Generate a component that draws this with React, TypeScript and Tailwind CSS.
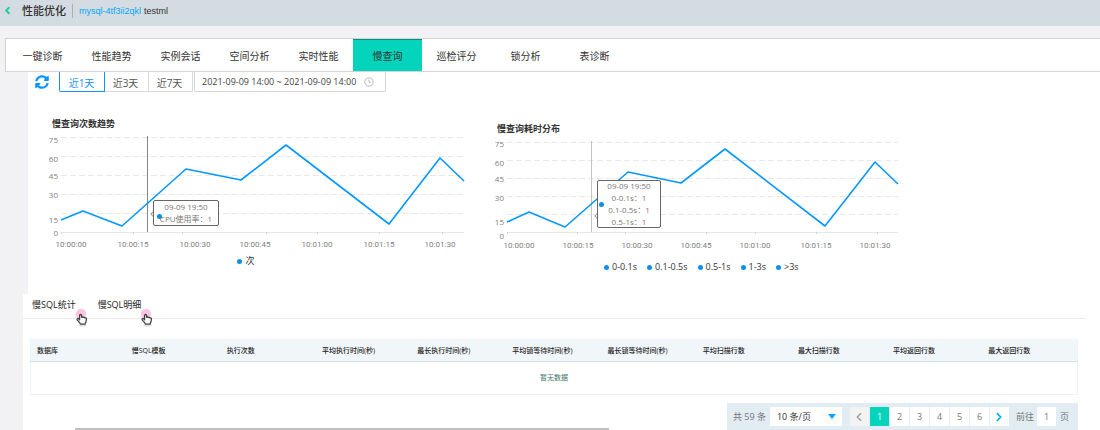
import { FaSyncAlt } from "react-icons/fa";
import { ChevronLeft, ChevronRight } from "lucide-react";

type Point = [number, number];
type AxisLabel = { x: number; text: string };

type ChartProps = {
  label: string;
  gridTop: number;
  gridStep: number;
  left: number;
  right: number;
  points: Point[];
  yLabels: number[];
  xLabels: AxisLabel[];
  xLabelY: number;
  ticks: number[];
  cursorX: number;
  cursorClass: string;
};

const TABS = ["一键诊断", "性能趋势", "实例会话", "空间分析", "实时性能", "慢查询", "巡检评分", "锁分析", "表诊断"];
const RANGES = ["近1天", "近3天", "近7天"];
const Y_VALUES = ["75", "60", "45", "30", "15", "0"];
const TIMES = ["10:00:00", "10:00:15", "10:00:30", "10:00:45", "10:01:00", "10:01:15", "10:01:30"];
const BUCKETS = ["0-0.1s", "0.1-0.5s", "0.5-1s", "1-3s", ">3s"];
const COLUMNS = [
  "数据库",
  "慢SQL模板",
  "执行次数",
  "平均执行时间(秒)",
  "最长执行时间(秒)",
  "平均锁等待时间(秒)",
  "最长锁等待时间(秒)",
  "平均扫描行数",
  "最大扫描行数",
  "平均返回行数",
  "最大返回行数",
];
const PAGES = [1, 2, 3, 4, 5, 6];

const labelsAt = (xs: number[]): AxisLabel[] => xs.map((x, i) => ({ x, text: TIMES[i] }));

function LineChart(p: ChartProps) {
  const rows = [0, 1, 2, 3, 4];
  const base = p.gridTop + p.gridStep * 5;
  return (
    <svg role="img" aria-label={p.label} width="432" height="120" viewBox="0 0 432 120" className="block">
      {rows.map((r) => (
        <line
          key={r}
          x1={p.left}
          x2={p.right}
          y1={p.gridTop + r * p.gridStep + 0.5}
          y2={p.gridTop + r * p.gridStep + 0.5}
          stroke="#e8e8e8"
          strokeDasharray="6 3"
        />
      ))}
      <line x1={p.left} x2={p.right} y1={base + 0.5} y2={base + 0.5} stroke="#e6e6e6" />
      {p.ticks.map((x) => (
        <line key={x} x1={x + 0.5} x2={x + 0.5} y1={base} y2={base + 2} stroke="#d4d4d4" />
      ))}
      {Y_VALUES.map((v, i) => (
        <text key={v} x={p.left - 3} y={p.yLabels[i] + 3} textAnchor="end" className="fill-[#808080] text-[8px]">
          {v}
        </text>
      ))}
      {p.xLabels.map((l) => (
        <text
          key={l.text}
          x={l.x}
          y={p.xLabelY}
          textAnchor="middle"
          className="fill-[#808080] font-['Roboto',sans-serif] text-[8px]"
        >
          {l.text}
        </text>
      ))}
      <line x1={p.cursorX} x2={p.cursorX} y1={p.gridTop - 1} y2={base} className={p.cursorClass} />
      <polyline
        points={p.points.map((q) => q.join(",")).join(" ")}
        fill="none"
        stroke="#0698ff"
        strokeWidth="1.6"
        strokeLinejoin="round"
      />
    </svg>
  );
}

function Dot() {
  return <span className="size-[5px] shrink-0 rounded-full bg-[#0a90e8]" />;
}

function HandCursor() {
  return (
    <span className="pointer-events-none absolute top-[14px] left-full -ml-px">
      <svg width="15" height="19" viewBox="0 0 15 19" aria-hidden="true">
        <circle cx="6" cy="6" r="5.2" fill="#ffc6de" />
        <ellipse cx="7.6" cy="17.4" rx="4" ry="1" fill="#ddd" />
        <path
          d="M4.6 7.6c0-1.5 2-1.5 2 0v1.7c.5-.5 1.400-.4 1.700.2.5-.4 1.300-.2 1.600.4 1-.3 1.600.3 1.500 1.300-.1 1.800-.3 2.600-1 3.600l-.3 1.300H5.300l-.4-1.200-2.600-2.800c-.8-1.200.4-2.100 1.300-1.300l1 .9z"
          fill="#fff"
          stroke="#444"
          strokeWidth="1.3"
          strokeLinejoin="round"
        />
      </svg>
    </span>
  );
}

export default function App() {
  return (
    <div className="flex min-h-screen flex-col overflow-hidden bg-[#f2f2f4] font-['Open_Sans','Noto_Sans_CJK_SC',sans-serif] text-[#333]">
      <header className="flex h-[26px] shrink-0 items-center bg-linear-to-b from-[#d4dbe3] to-[#d3dddf] pb-[5px] pl-[2px]">
        <a href="#back" aria-label="返回" className="flex w-5 items-center text-[#12cfa8]">
          <ChevronLeft size={11} strokeWidth={4} />
        </a>
        <h1 className="text-[11px] leading-4 font-medium">性能优化</h1>
        <span className="mr-[6px] ml-[6px] h-[14px] w-px bg-[#a9b0b5]" />
        <p className="flex gap-[3px] font-['Liberation_Sans',sans-serif] text-[9px] leading-4">
          <a href="#instance" className="text-[#00a8f8]">
            mysql-4tf3ii2qkl
          </a>
          <span>testml</span>
        </p>
      </header>

      <nav className="mt-3 ml-[5px] flex h-[34px] shrink-0 border border-r-0 border-[#d4d4d6] bg-white pl-[2px]">
        {TABS.map((t) => (
          <button
            key={t}
            type="button"
            className={
              t === "慢查询"
                ? "w-[69px] border-t border-[#078f7c] bg-[#04d4bc] pt-px text-[10px] leading-4"
                : "w-[69px] pt-[2px] text-[10px] leading-4"
            }
          >
            {t}
          </button>
        ))}
      </nav>

      <main className="ml-[23px] flex grow flex-col">
        <div className="ml-[5px] h-[222px] bg-white">
          <div className="flex h-5 items-center">
            <button type="button" aria-label="刷新" className="mr-[10px] ml-[7px] text-[#0a95ff]">
              <FaSyncAlt size={14} />
            </button>
            <div className="flex h-5">
              {RANGES.map((r, i) => (
                <button
                  key={r}
                  type="button"
                  className={
                    i === 0
                      ? "w-[46px] rounded-bl-xs border border-t-0 border-[#1890ff] pt-[2px] pr-px text-[10px] leading-4 text-[#1890ff]"
                      : "w-11 border-r border-b border-[#d9d9d9] pt-[2px] pr-[2px] text-[10px] leading-4 text-[#555]"
                  }
                >
                  {r}
                </button>
              ))}
            </div>
            <label className="ml-px flex h-5 w-[192px] items-center rounded-b-xs border border-t-0 border-[#d4d4d4] pr-[10px] pl-[7px]">
              <input
                aria-label="时间范围"
                defaultValue="2021-09-09 14:00 ~ 2021-09-09 14:00"
                className="w-[162px] text-[9px] leading-4 text-[#444] outline-none"
              />
              <svg width="10" height="10" viewBox="0 0 10 10" fill="none" stroke="#bbb" aria-hidden="true">
                <circle cx="5" cy="5" r="4.2" />
                <path d="M5 2.5V5.3H7" />
              </svg>
            </label>
          </div>

          <div className="flex">
            <section className="w-[445px] shrink-0 pt-6 pl-4">
              <h2 className="pl-2 text-[9px] leading-4 font-bold">慢查询次数趋势</h2>
              <div className="relative">
                <LineChart
                  label="慢查询次数趋势"
                  gridTop={5}
                  gridStep={19}
                  left={17}
                  right={420}
                  points={[[17, 88], [39, 79], [78, 94], [142, 37], [197, 48], [242, 13], [345, 92], [396, 26], [420, 49]]}
                  yLabels={[8, 27, 44, 63, 88, 101]}
                  xLabels={labelsAt([27, 89, 151, 211, 273, 335, 396])}
                  xLabelY={115}
                  ticks={[17, 89, 138, 222, 273, 335, 398]}
                  cursorX={103.5}
                  cursorClass="stroke-[#858585]"
                />
                <span className="absolute top-[80px] left-[107px] size-1 rotate-45 border border-[#999]" />
                <div className="absolute top-[68px] left-[109px] h-[26px] w-[66px] rounded-xs border border-[#666] bg-white text-center text-[8px] leading-3 text-[#777]">
                  <span className="absolute top-[13px] left-[3px] flex">
                    <Dot />
                  </span>
                  <p>09-09 19:50</p>
                  <p className="relative">
                    CPU使用率：<span className="text-[#a06a90]">1</span>
                  </p>
                </div>
              </div>
              <div className="mt-px flex w-[404px] items-center justify-center gap-[3px] text-[9px] leading-4">
                <Dot />次
              </div>
            </section>

            <section className="shrink-0 pt-[29px] pl-4">
              <h2 className="pl-2 text-[9px] leading-4 font-bold">慢查询耗时分布</h2>
              <div className="relative">
                <LineChart
                  label="慢查询耗时分布"
                  gridTop={5}
                  gridStep={18}
                  left={18}
                  right={409}
                  points={[[18, 85], [40, 75], [76, 90], [139, 35], [192, 46], [236, 12], [336, 89], [386, 25], [409, 47]]}
                  yLabels={[7, 26, 42, 61, 85, 99]}
                  xLabels={labelsAt([30, 89, 148, 207, 266, 327, 386])}
                  xLabelY={111}
                  ticks={[18, 88, 136, 217, 266, 327, 388]}
                  cursorX={102.5}
                  cursorClass="stroke-[#c4c4c4]"
                />
                <span className="absolute top-[77px] left-[106px] size-1 rotate-45 border border-[#999]" />
                <div className="absolute top-[43px] left-[108px] h-12 w-[64px] rounded-xs border border-[#666] bg-white text-center text-[8px] leading-3 text-[#777]">
                  <span className="absolute top-[21px] left-px flex">
                    <Dot />
                  </span>
                  <div className="-mt-px">
                    <p>09-09 19:50</p>
                    {BUCKETS.slice(0, 3).map((b) => (
                      <p key={b}>
                        {b}：<span className="text-[#a06a90]">1</span>
                      </p>
                    ))}
                  </div>
                </div>
              </div>
              <ul className="mt-[2px] ml-[115px] flex gap-[10px] text-[9px] leading-4">
                {BUCKETS.map((b) => (
                  <li key={b} className="flex items-center gap-[3px]">
                    <Dot />
                    {b}
                  </li>
                ))}
              </ul>
            </section>
          </div>
        </div>

        <div className="flex grow flex-col bg-white">
          <div className="mr-[15px] flex h-[25px] gap-[22px] border-b border-[#ececec] pl-[9px]">
            {["慢SQL统计", "慢SQL明细"].map((t) => (
              <button key={t} type="button" className="relative h-[22px] text-[9px] leading-4 text-[#222]">
                {t}
                <HandCursor />
              </button>
            ))}
          </div>

          <div className="mt-5 mr-[22px] ml-[7px]">
            <table className="w-full table-fixed border-collapse border border-[#edf3f8] text-[7px]">
              <thead>
                <tr className="h-[22px] border-b border-[#d3e1e8] bg-[#f1f6fa]">
                  {COLUMNS.map((c) => (
                    <th key={c} scope="col" className="p-0 pl-[6px] text-left leading-3 font-medium whitespace-nowrap text-[#222]">
                      {c}
                    </th>
                  ))}
                </tr>
              </thead>
              <tbody>
                <tr className="h-[33px]">
                  <td colSpan={COLUMNS.length} className="p-0 text-center leading-3 text-[#3d7468]">
                    暂无数据
                  </td>
                </tr>
              </tbody>
            </table>
          </div>

          <div className="mt-2 mr-[22px] flex grow items-end justify-between">
            <div className="ml-[52px] h-[2px] w-[534px] bg-[#bfbfbf]" />
            <div className="flex h-[27px] items-center bg-[#e1ecf3] px-[6px] text-[9px] leading-4 text-[#777]">
              <span className="w-[37px]">共 59 条</span>
              <span className="relative flex">
                <select aria-label="每页条数" className="h-[19px] w-[72px] appearance-none bg-white pl-[7px] text-[#333]">
                  <option>10 条/页</option>
                </select>
                <span className="pointer-events-none absolute top-[7px] right-[6px] border-x-4 border-t-[5px] border-x-transparent border-t-[#00a8ff]" />
              </span>
              <div className="ml-2 flex gap-px">
                <button type="button" aria-label="上一页" className="flex h-[19px] w-[19px] items-center justify-center bg-[#f3f3f3] text-[#999]">
                  <ChevronLeft size={14} strokeWidth={2} />
                </button>
                {PAGES.map((n) => (
                  <button
                    key={n}
                    type="button"
                    className={n === 1 ? "h-[19px] w-[19px] bg-[#04d4bc] text-white" : "h-[19px] w-[19px] bg-white"}
                  >
                    {n}
                  </button>
                ))}
                <button type="button" aria-label="下一页" className="flex h-[19px] w-[19px] items-center justify-center bg-white text-[#00a8ff]">
                  <ChevronRight size={14} strokeWidth={3} />
                </button>
              </div>
              <label className="ml-[7px] flex items-center gap-[3px]">
                前往
                <input aria-label="页码" defaultValue="1" className="h-[19px] w-[19px] bg-white text-center outline-none" />
              </label>
              <span className="ml-1 pr-[3px]">页</span>
            </div>
          </div>
        </div>
      </main>
    </div>
  );
}
